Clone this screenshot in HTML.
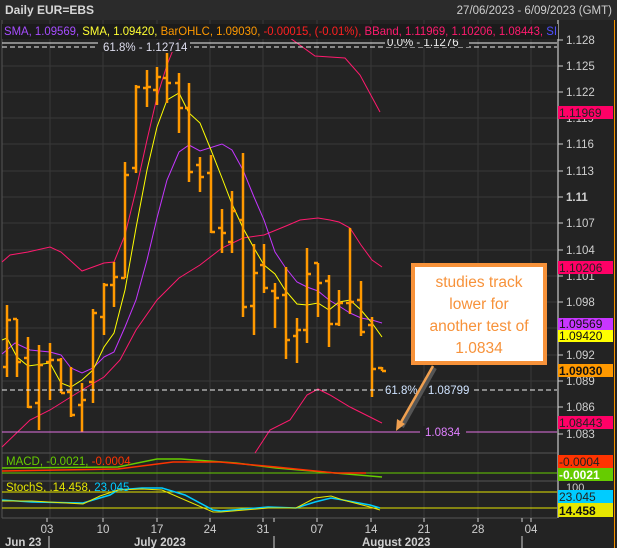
<!DOCTYPE html>
<html><head><meta charset="utf-8"><style>
html,body{margin:0;padding:0;background:#222;}
svg{display:block;font-family:"Liberation Sans",sans-serif;}
</style></head><body>
<svg width="617" height="548" viewBox="0 0 617 548" xmlns="http://www.w3.org/2000/svg">
<rect width="617" height="548" fill="#232323"/>
<rect x="0" y="0" width="617" height="20" fill="#2b2b2b"/>
<text x="5" y="14" font-size="12" font-weight="bold" fill="#d8d8d8">Daily EUR=EBS</text>
<text x="612" y="14" font-size="11.5" fill="#cfcfcf" text-anchor="end">27/06/2023 - 6/09/2023 (GMT)</text>
<!-- grid -->
<g stroke="#383838" stroke-width="1">
<line x1="50" y1="20" x2="50" y2="518"/><line x1="103" y1="20" x2="103" y2="518"/><line x1="157" y1="20" x2="157" y2="518"/><line x1="210" y1="20" x2="210" y2="518"/><line x1="263" y1="20" x2="263" y2="518"/><line x1="317" y1="20" x2="317" y2="518"/><line x1="371" y1="20" x2="371" y2="518"/><line x1="424" y1="20" x2="424" y2="518"/><line x1="478" y1="20" x2="478" y2="518"/><line x1="531" y1="20" x2="531" y2="518"/>
<line x1="2" y1="66" x2="557" y2="66"/><line x1="2" y1="92" x2="557" y2="92"/><line x1="2" y1="118" x2="557" y2="118"/><line x1="2" y1="144" x2="557" y2="144"/><line x1="2" y1="171" x2="557" y2="171"/><line x1="2" y1="197" x2="557" y2="197"/><line x1="2" y1="223" x2="557" y2="223"/><line x1="2" y1="250" x2="557" y2="250"/><line x1="2" y1="276" x2="557" y2="276"/><line x1="2" y1="302" x2="557" y2="302"/><line x1="2" y1="328" x2="557" y2="328"/><line x1="2" y1="355" x2="557" y2="355"/><line x1="2" y1="381" x2="557" y2="381"/><line x1="2" y1="407" x2="557" y2="407"/>
</g>
<g stroke="#555" fill="none"><line x1="2" y1="453" x2="557" y2="453"/><line x1="2" y1="481" x2="557" y2="481"/><line x1="2" y1="518" x2="557" y2="518"/><line x1="2" y1="20" x2="2" y2="518"/></g>
<line x1="558" y1="20" x2="558" y2="518" stroke="#e8e8e8"/>
<line x1="614.5" y1="20" x2="614.5" y2="548" stroke="#f39200"/>
<g fill="none" stroke="#ff1a6e" stroke-width="1">
<polyline points="2,262 10,255 28,252 50,247 61,252 82,271 93,267 104,263 114,262 125,235 136,190 147,140 157,97 167,65 175,45 190,28 230,26 262,30 290,38 315,56 345,58 360,75 380,112"/>
<polyline points="2,447 30,420 50,410 82,390 104,377 120,360 136,330 157,300 179,278 200,265 222,248 243,238 264,235 286,226 300,220 318,218 330,220 339,222 350,228 361,245 372,260 382,267"/>
<polyline points="255,453 270,430 290,420 307,395 318,389 330,395 350,407 372,418 382,423"/>
</g>
<polyline fill="none" stroke="#c436ff" points="2,354 15,343 30,350 50,352 61,355 71,368 82,373 93,368 104,357 114,352 125,327 136,300 147,260 157,218 167,180 179,152 189,145 200,151 222,144 232,150 243,170 254,197 264,220 275,252 285,267 297,282 307,287 318,291 329,300 339,306 350,313 361,318 372,320 382,323"/>
<polyline fill="none" stroke="#ffff00" points="2,340 7,338 17,357 28,366 50,363 61,383 71,387 82,380 93,370 104,347 114,333 125,290 136,228 147,170 157,127 167,100 179,93 189,113 200,123 211,150 222,178 232,204 243,228 254,248 264,265 275,274 285,290 297,304 307,305 318,303 329,310 339,302 350,300 361,310 372,323 382,337"/>
<g stroke="#ff9900" stroke-width="2.5" fill="none">
<path d="M7 305V377M3 367H7M7 320H11"/>
<path d="M17 319V377M13 319H17M17 362H21"/>
<path d="M28 337V408M24 358H28M28 407H32"/>
<path d="M39 345V430M35 403H39M39 365H43"/>
<path d="M50 343V400M46 362H50M50 360H54"/>
<path d="M61 358V393M57 360H61M61 393H65"/>
<path d="M71 367V417M67 392H71M71 415H75"/>
<path d="M82 383V432M78 405H82M82 400H86"/>
<path d="M93 309V403M89 382H93M93 313H97"/>
<path d="M104 283V335M100 317H104M104 285H108"/>
<path d="M114 262V307M110 285H114M114 277H118"/>
<path d="M125 162V278M121 278H125M125 175H129"/>
<path d="M136 85V173M132 168H136M136 87H140"/>
<path d="M147 70V107M143 88H147M147 87H151"/>
<path d="M157 67V105M153 90H157M157 77H161"/>
<path d="M167 53V103M163 78H167M167 83H171"/>
<path d="M179 73V133M175 83H179M179 108H183"/>
<path d="M189 83V182M185 108H189M189 172H193"/>
<path d="M200 157V192M196 165H200M200 177H204"/>
<path d="M211 155V233M207 173H211M211 232H215"/>
<path d="M222 209V253M218 228H222M222 233H226"/>
<path d="M232 191V253M228 242H232M232 211H236"/>
<path d="M243 153V317M239 220H243M243 307H247"/>
<path d="M254 244V335M250 306H254M254 273H258"/>
<path d="M264 244V293M260 265H264M264 288H268"/>
<path d="M275 283V328M271 291H275M275 298H279"/>
<path d="M286 267V359M282 295H286M286 340H290"/>
<path d="M297 318V363M293 336H297M297 330H301"/>
<path d="M307 248V343M303 330H307M307 274H311"/>
<path d="M318 263V317M314 263H318M318 283H322"/>
<path d="M329 275V347M325 281H329M329 324H333"/>
<path d="M339 290V326M335 324H339M339 303H343"/>
<path d="M350 228V314M346 303H350M350 302H354"/>
<path d="M361 281V336M357 300H361M361 332H365"/>
<path d="M372 317V397M368 325H372M372 369H376"/>
<path d="M382 367V371M378 368H382M382 371H386"/>
</g>
<line x1="2" y1="43" x2="557" y2="43" stroke="#eee"/>
<line x1="2" y1="47" x2="557" y2="47" stroke="#eee" stroke-dasharray="5,3"/>
<rect x="98" y="40" width="92" height="12" fill="#232323"/>
<text x="103" y="51" font-size="11.5" fill="#dde">61.8% - 1.12714</text>
<rect x="385" y="36" width="84" height="11" fill="#232323"/>
<text x="387" y="46" font-size="11.5" fill="#eee">0.0% - 1.1276</text>
<line x1="2" y1="390" x2="557" y2="390" stroke="#eee" stroke-dasharray="5,3"/>
<rect x="383" y="384" width="90" height="12" fill="#232323"/>
<text x="385" y="394" font-size="11.5" fill="#cfe3ff">61.8% - 1.08799</text>
<line x1="2" y1="432" x2="557" y2="432" stroke="#e070e0"/>
<rect x="420" y="426" width="46" height="12" fill="#232323"/>
<text x="425" y="436" font-size="11.5" fill="#e080ff">1.0834</text>
<rect x="2" y="24" width="556" height="15" fill="#1b1b1b"/>
<text x="4" y="35" font-size="11.6" textLength="553" lengthAdjust="spacingAndGlyphs"><tspan fill="#a64dff">SMA, 1.09569, </tspan><tspan fill="#ffff33">SMA, 1.09420, </tspan><tspan fill="#ff9900">BarOHLC, 1.09030, </tspan><tspan fill="#ff2020">-0.00015, (-0.01%), </tspan><tspan fill="#ff1a6e">BBand, 1.11969, 1.10206, 1.08443, </tspan><tspan fill="#5050ff">SI</tspan></text>
<g font-size="11.5" fill="#cfcfcf" stroke="none">
<text x="566" y="44">1.128</text><text x="566" y="70">1.125</text><text x="566" y="96">1.122</text><text x="566" y="122">1.119</text><text x="566" y="148">1.116</text><text x="566" y="175">1.113</text><text x="566" y="201" font-weight="bold">1.11</text><text x="566" y="227">1.107</text><text x="566" y="254">1.104</text><text x="566" y="280">1.101</text><text x="566" y="306">1.098</text><text x="566" y="332">1.095</text><text x="566" y="359">1.092</text><text x="566" y="385">1.089</text><text x="566" y="411">1.086</text><text x="566" y="438">1.083</text>
</g>
<g stroke="#cfcfcf"><line x1="558" y1="40" x2="563" y2="40"/><line x1="558" y1="66" x2="563" y2="66"/><line x1="558" y1="92" x2="563" y2="92"/><line x1="558" y1="118" x2="563" y2="118"/><line x1="558" y1="144" x2="563" y2="144"/><line x1="558" y1="171" x2="563" y2="171"/><line x1="558" y1="197" x2="563" y2="197"/><line x1="558" y1="223" x2="563" y2="223"/><line x1="558" y1="250" x2="563" y2="250"/><line x1="558" y1="276" x2="563" y2="276"/><line x1="558" y1="302" x2="563" y2="302"/><line x1="558" y1="328" x2="563" y2="328"/><line x1="558" y1="355" x2="563" y2="355"/><line x1="558" y1="381" x2="563" y2="381"/><line x1="558" y1="407" x2="563" y2="407"/><line x1="558" y1="434" x2="563" y2="434"/></g>
<g font-size="12">
<rect x="558" y="106" width="55" height="13" fill="#ff0066"/><text x="559" y="117" fill="#222">1.11969</text>
<rect x="558" y="261" width="55" height="13" fill="#ff0066"/><text x="559" y="272" fill="#222">1.10206</text>
<rect x="558" y="318" width="55" height="12" fill="#c836ff"/><text x="559" y="328" fill="#111">1.09569</text>
<rect x="558" y="330" width="55" height="12" fill="#ffff00"/><text x="559" y="340" fill="#111">1.09420</text>
<rect x="558" y="364" width="55" height="13" fill="#ff9900"/><text x="559" y="375" fill="#111" font-weight="bold">1.09030</text>
<rect x="558" y="416" width="55" height="13" fill="#ff0066"/><text x="559" y="427" fill="#222">1.08443</text>
</g>
<rect x="413" y="265" width="132" height="98" fill="#fff" stroke="#f7923a" stroke-width="4"/>
<g font-size="15.5" fill="#f7923a" text-anchor="middle">
<text x="479" y="287">studies track</text><text x="479" y="309">lower for</text><text x="479" y="331">another test of</text><text x="479" y="353">1.0834</text>
</g>
<line x1="435" y1="368" x2="402" y2="427" stroke="#555" stroke-width="4"/>
<line x1="433" y1="366" x2="400" y2="424" stroke="#f0a050" stroke-width="2.5"/>
<path d="M396 431 L397 419 L405 424 Z" fill="#f0a050"/>
<line x1="2" y1="473" x2="557" y2="473" stroke="#66cc00"/>
<polyline fill="none" stroke="#66cc00" stroke-width="1.5" points="2,468 118,467 157,459 181,459 236,463 276,468 335,473 382,477"/>
<polyline fill="none" stroke="#ff3300" stroke-width="1.5" points="2,471 118,469 173,462 220,462 276,467 335,473 366,473"/>
<text x="6" y="465" font-size="11.5"><tspan fill="#66cc00">MACD, -0.0021, </tspan><tspan fill="#ff3300">-0.0004</tspan></text>
<rect x="558" y="455" width="55" height="13" fill="#ff3300"/><text x="559" y="466" font-size="12" fill="#222">-0.0004</text>
<rect x="558" y="468" width="55" height="13" fill="#66cc00"/><text x="559" y="479" font-size="12" fill="#fff" font-weight="bold">-0.0021</text>
<line x1="2" y1="492" x2="557" y2="492" stroke="#e6e600"/>
<line x1="2" y1="508" x2="557" y2="508" stroke="#e6e600"/>
<polyline fill="none" stroke="#00ccff" stroke-width="1.5" points="2,500 32,502 83,503 110,495 118,490 142,488 162,488 185,495 213,510 221,511 268,507 296,508 315,502 331,498 343,500 370,505 380,508"/>
<polyline fill="none" stroke="#e6e600" stroke-width="1" points="2,501 32,501 83,504 100,496 118,490 142,489 162,490 185,500 213,512 221,512 268,508 296,508 315,498 331,496 343,500 370,507 380,510"/>
<text x="6" y="491" font-size="11.5"><tspan fill="#e6e600">StochS, .14.458, </tspan><tspan fill="#00ccff">23.045</tspan></text>
<text x="566" y="491" font-size="11" fill="#cfcfcf">100</text>
<rect x="558" y="490" width="55" height="13" fill="#00ccff"/><text x="559" y="501" font-size="12" fill="#222">23.045</text>
<rect x="558" y="503" width="55" height="14" fill="#e6e600"/><text x="559" y="515" font-size="12" fill="#111" font-weight="bold">14.458</text>
<g font-size="11.5" fill="#cfcfcf" text-anchor="middle">
<text x="47" y="533">03</text><text x="103" y="533">10</text><text x="157" y="533">17</text><text x="210" y="533">24</text><text x="263" y="533">31</text><text x="317" y="533">07</text><text x="371" y="533">14</text><text x="424" y="533">21</text><text x="478" y="533">28</text><text x="531" y="533">04</text>
</g>
<g stroke="#cfcfcf"><line x1="47" y1="518" x2="47" y2="522"/><line x1="103" y1="518" x2="103" y2="522"/><line x1="157" y1="518" x2="157" y2="522"/><line x1="210" y1="518" x2="210" y2="522"/><line x1="263" y1="518" x2="263" y2="522"/><line x1="274" y1="518" x2="274" y2="522"/><line x1="317" y1="518" x2="317" y2="522"/><line x1="371" y1="518" x2="371" y2="522"/><line x1="424" y1="518" x2="424" y2="522"/><line x1="478" y1="518" x2="478" y2="522"/><line x1="522" y1="518" x2="522" y2="522"/><line x1="531" y1="518" x2="531" y2="522"/>
<line x1="49" y1="536" x2="49" y2="548"/><line x1="274" y1="536" x2="274" y2="548"/><line x1="522" y1="536" x2="522" y2="548"/></g>
<g font-size="11.5" font-weight="bold" fill="#cfcfcf">
<text x="5" y="546">Jun 23</text><text x="134" y="546">July 2023</text><text x="362" y="546">August 2023</text>
</g>
</svg>
</body></html>
